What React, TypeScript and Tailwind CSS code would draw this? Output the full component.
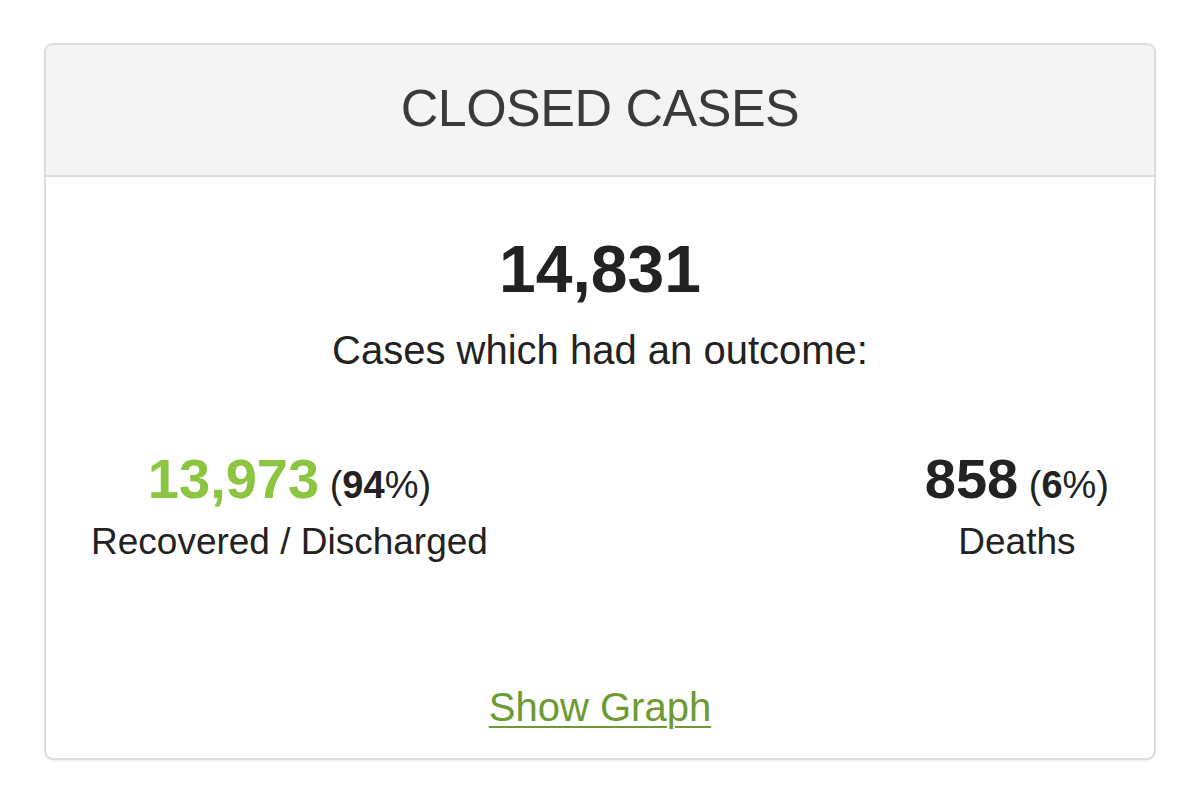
export default function App() {
  return (
    <div
      className="min-h-[795px] bg-white pt-[43px] pl-[44px]"
      style={{ fontFamily: '"Liberation Sans", Arial, Helvetica, sans-serif' }}
    >
      <div className="w-[1112px] h-[717px] border-2 border-[#dcdcdc] rounded-[9px] overflow-hidden bg-white shadow-[0_1px_2px_rgba(0,0,0,0.08)] flex flex-col">
        {/* Header */}
        <div className="h-[132px] shrink-0 bg-[#f4f4f4] border-b-2 border-[#dcdcdc] flex items-center justify-center pb-1">
          <h3 className="text-[52px] leading-none font-light text-[#3a3a3a] tracking-[-0.5px]">CLOSED CASES</h3>
        </div>

        {/* Body */}
        <div className="flex-1 flex flex-col pt-[59px] text-[#222]">
          <div className="text-center text-[66px] leading-none font-bold">14,831</div>
          <div className="text-center text-[40px] leading-none mt-[28px]">Cases which had an outcome:</div>

          <div className="flex justify-between px-[45px] mt-[81px]">
            <div className="text-center">
              <div className="text-[56px] leading-none whitespace-nowrap">
                <span className="font-bold text-[#8cc540]">13,973</span>
                <span className="text-[38px]"> (<strong>94</strong>%)</span>
              </div>
              <div className="text-[37px] leading-none mt-[16px]">Recovered / Discharged</div>
            </div>
            <div className="text-center">
              <div className="text-[56px] leading-none whitespace-nowrap">
                <span className="font-bold">858</span>
                <span className="text-[38px]">&nbsp;(<strong>6</strong>%)</span>
              </div>
              <div className="text-[37px] leading-none mt-[16px]">Deaths</div>
            </div>
          </div>

          <div className="text-center mt-[127px]">
            <a href="#" className="text-[40px] leading-none text-[#6c9a33] underline decoration-2 underline-offset-[5px]">
              Show Graph
            </a>
          </div>
        </div>
      </div>
    </div>
  );
}
